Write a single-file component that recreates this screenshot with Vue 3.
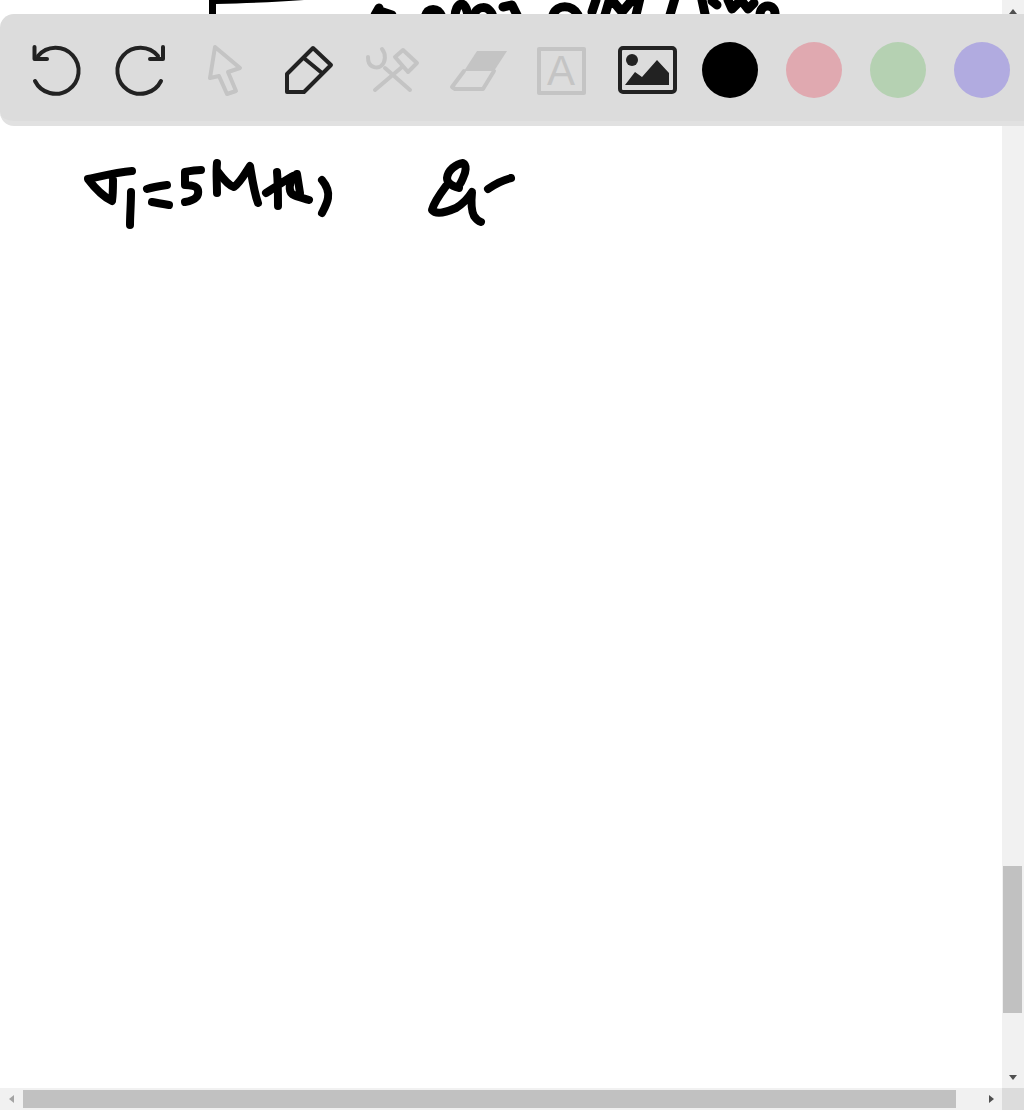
<script setup>
// pen colours on the right of the toolbar
const swatches = ['#000000', '#e0a9b0', '#b5d1b2', '#b1abe0'];
</script>

<template>
  <div class="board">
    <div class="canvas">
      <svg class="ink" width="1002" height="1088" viewBox="0 0 1002 1088">
        <!-- earlier writing, mostly hidden under the toolbar -->
        <path class="taper" d="M209 0 H304 C280 2 250 3 216 4 V16 H209 Z" />
        <g class="stroke thick">
          <path d="M375 15 L379 8 M380 11 L392 15" />
          <path d="M425 17 C428 7 438 7 442 17" />
          <path d="M455 17 C455 3 466 -3 468 17" />
          <path d="M474 17 C475 5 490 4 493 17" />
          <path d="M503 7 L512 5 L517 15" />
          <path d="M553 15 C557 4 572 4 578 15" />
          <path d="M592 12 L596 0 M605 15 L610 -2 M612 0 L622 12 L632 0 M640 -2 L636 15" />
          <path d="M670 15 L675 -2" />
          <path d="M702 0 L705 14 M712 1 L717 5 M728 0 L732 9 L741 0 L748 9 L754 3 M760 15 C760 3 776 3 775 15" />
        </g>
        <!-- sigma_1 = 5 MPa) -->
        <g class="stroke">
          <path d="M132 171 C118 172 102 176 88 179 C94 187 102 196 112 201 C113 194 113 186 113 180" />
          <path d="M131 192 C131 204 130 215 130 225" />
          <path d="M147 189 C153 187 160 186 167 185 M152 202 C157 203 163 204 169 205" />
          <path d="M201 170 C196 170 190 171 185 172 C185 176 185 181 185 185 C190 185 197 186 198 190 C199 195 197 200 185 202" />
          <path d="M217 163 C216 172 217 183 217 193" />
          <path d="M218 172 C224 180 230 186 234 187 C240 183 246 172 250 166 C252 178 254 192 258 203" />
          <path d="M266 193 C274 188 284 181 293 176 M277 172 C278 183 278 194 278 206" />
          <path d="M292 177 C290 183 288 190 292 194 C297 197 303 198 309 200 M297 174 L300 193" />
          <path d="M322 180 C327 186 329 192 328 198 C327 204 324 209 322 213" />
        </g>
        <!-- E_1 - -->
        <g class="stroke">
          <path d="M459 188 C452 186 447 183 447 178 C448 170 456 164 463 163 C467 165 466 172 463 178 C461 183 459 186 457 187" />
          <path d="M446 186 C440 194 434 202 432 210 C436 215 447 212 456 208 C464 203 469 197 472 192 C471 202 471 210 474 216 C476 219 478 221 481 222" />
          <path d="M488 189 C495 184 503 180 511 178" />
        </g>
      </svg>
    </div>

    <div class="scroll-v">
      <div class="arrow"><span class="tri up"></span></div>
      <div class="track-v"><div class="thumb-v"></div></div>
      <div class="arrow"><span class="tri down"></span></div>
    </div>

    <div class="scroll-h">
      <div class="arrow"><span class="tri left"></span></div>
      <div class="track-h"><div class="thumb-h"></div></div>
      <div class="arrow"><span class="tri right"></span></div>
    </div>
    <div class="corner"></div>

    <div class="toolbar">
      <!-- undo -->
      <svg class="tool" viewBox="28 42 56 56">
        <path class="dark" d="M35 81 A23 23 0 1 0 38 56" />
        <path class="dark" d="M34.500 47 V59 H47" />
      </svg>
      <!-- redo -->
      <svg class="tool" viewBox="112 42 56 56">
        <path class="dark" d="M161 81 A23 23 0 1 1 158 56" />
        <path class="dark" d="M163 47 V59 H150" />
      </svg>
      <!-- pointer -->
      <svg class="tool" viewBox="196 42 56 56">
        <path class="muted" d="M215 47 L240 68 L228 72 L236 91 L227 94 L219 76 L210 78 Z" />
      </svg>
      <!-- pencil -->
      <svg class="tool" viewBox="280 42 56 56">
        <path class="dark" d="M313 48 L331 65 L304 92 H287 V74 Z" />
        <path class="dark" d="M305 59 L322 73" />
      </svg>
      <!-- tools -->
      <svg class="tool" viewBox="364 42 56 56">
        <path class="muted" d="M382 49 C386 54 386 62 381 66 C377 69 371 67 369 63 C368 61 368 59 368 57" />
        <path class="muted" d="M385 68 L410 90 M375 90 L402 67" />
        <path class="muted" d="M395 57 L403 50 L417 63 L408 72 Z" />
      </svg>
      <!-- eraser, first of the shifted group -->
      <svg class="tool shifted" viewBox="450 42 56 56">
        <path class="solid-muted" d="M477 51 H507 L494 71 H464 Z" />
        <path class="muted" d="M464 71 L452 87 L455 89 H483 L494 71" />
      </svg>
      <!-- text -->
      <svg class="tool" viewBox="534 42 56 56">
        <rect class="muted" x="539" y="49" width="45" height="44" stroke-linejoin="miter" />
        <text class="letter" x="561" y="85">A</text>
      </svg>
      <!-- image -->
      <svg class="tool" viewBox="618 42 56 56">
        <rect class="dark" x="620" y="48" width="55" height="44" rx="3" />
        <circle class="solid-dark" cx="632" cy="60" r="6" />
        <path class="solid-dark" d="M625 85 L635 72 L642 77 L657 60 L669 73 V85 Z" />
      </svg>
      <span
        v-for="color in swatches"
        :key="color"
        class="swatch"
        :style="{ background: color }"
      ></span>
    </div>
  </div>
</template>

<style scoped>
.board {
  position: relative;
  display: grid;
  grid-template-columns: 1fr 22px;
  grid-template-rows: 1fr 22px;
  width: 1024px;
  height: 1110px;
  overflow: hidden;
  background: #fff;
  font-family: "Liberation Sans", Arial, sans-serif;
}

.canvas {
  overflow: hidden;
}

.ink {
  display: block;
}

.stroke {
  fill: none;
  stroke: #000;
  stroke-width: 8;
  stroke-linecap: round;
  stroke-linejoin: round;
}

.thick {
  stroke-width: 9;
}

.taper {
  fill: #000;
}

.toolbar {
  position: absolute;
  top: 14px;
  left: 0;
  right: 0;
  height: 112px;
  box-sizing: border-box;
  display: flex;
  align-items: center;
  gap: 28px;
  padding: 5px 0 0 28px;
  background: #dcdcdc;
  border-bottom: 5px solid #e1e1e1;
  border-radius: 14px 0 0 14px;
}

.tool {
  flex: none;
  width: 56px;
  height: 56px;
  overflow: visible;
}

.shifted {
  margin-left: 2px;
}

.dark {
  fill: none;
  stroke: #222;
  stroke-width: 4;
  stroke-linejoin: round;
  stroke-linecap: round;
}

.muted {
  fill: none;
  stroke: #c4c4c4;
  stroke-width: 4;
  stroke-linejoin: round;
  stroke-linecap: round;
}

.solid-muted {
  fill: #c4c4c4;
}

.solid-dark {
  fill: #222;
}

.letter {
  fill: #c4c4c4;
  font-size: 42px;
  text-anchor: middle;
}

.swatch {
  flex: none;
  width: 56px;
  height: 56px;
  border-radius: 50%;
}

.scroll-v,
.scroll-h {
  display: flex;
  background: #f1f1f1;
}

.scroll-v {
  flex-direction: column;
}

.arrow {
  flex: none;
  width: 22px;
  height: 22px;
  display: flex;
  align-items: center;
  justify-content: center;
}

.track-v,
.track-h {
  flex: 1;
  min-width: 0;
  min-height: 0;
}

.thumb-v {
  width: 19px;
  height: 147px;
  margin: 844px 0 0 1px;
  background: #c1c1c1;
}

.thumb-h {
  width: 933px;
  height: 18px;
  margin: 2px 0 0 1px;
  background: #c1c1c1;
}

.corner {
  background: #dcdcdc;
}

.tri {
  width: 0;
  height: 0;
  border: 4px solid transparent;
}

.tri.up {
  border-top: 0;
  border-bottom: 5px solid #505050;
}

.tri.down {
  border-bottom: 0;
  border-top: 5px solid #505050;
}

.tri.left {
  border-left: 0;
  border-right: 5px solid #a3a3a3;
}

.tri.right {
  border-right: 0;
  border-left: 5px solid #505050;
}
</style>

<style>
body {
  overflow: hidden;
}
</style>
